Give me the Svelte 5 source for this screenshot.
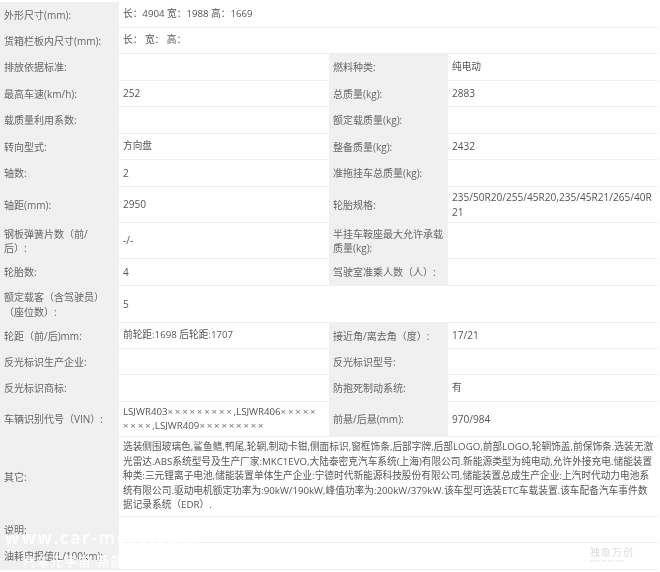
<script>
	// rows of the spec sheet: a/b left label and value, c/d right label and value
	// \uFF1A \uFF08 \uFF09 are the full width colon and brackets of the original
	const rows = [
		{ h: 26, a: '外形尺寸(mm):', b: '长\uFF1A4904 宽\uFF1A1988 高\uFF1A1669', plain: true },
		{ h: 26, a: '货箱栏板内尺寸(mm):', b: '长\uFF1A 宽\uFF1A 高\uFF1A', plain: true },
		{ h: 27, a: '排放依据标准:', b: '', c: '燃料种类:', d: '纯电动' },
		{ h: 26, a: '最高车速(km/h):', b: '252', c: '总质量(kg):', d: '2883' },
		{ h: 27, a: '载质量利用系数:', b: '', c: '额定载质量(kg):', d: '' },
		{ h: 26, a: '转向型式:', b: '方向盘', c: '整备质量(kg):', d: '2432' },
		{ h: 27, a: '轴数:', b: '2', c: '准拖挂车总质量(kg):', d: '' },
		{ h: 36, a: '轴距(mm):', b: '2950', c: '轮胎规格:', d: '235/50R20/255/45R20,235/45R21/265/40R21' },
		{ h: 36, a: '钢板弹簧片数\uFF08前/\n后\uFF09:', b: '-/-', c: '半挂车鞍座最大允许承载质量(kg):', d: '' },
		{ h: 27, a: '轮胎数:', b: '4', c: '驾驶室准乘人数\uFF08人\uFF09:', d: '' },
		{ h: 37, a: '额定载客\uFF08含驾驶员\uFF09\n\uFF08座位数\uFF09:', b: '5', plain: true },
		{ h: 26, a: '轮距\uFF08前/后)mm:', b: '前轮距:1698 后轮距:1707', c: '接近角/离去角\uFF08度\uFF09:', d: '17/21' },
		{ h: 26, a: '反光标识生产企业:', b: '', c: '反光标识型号:', d: '' },
		{ h: 27, a: '反光标识商标:', b: '', c: '防抱死制动系统:', d: '有' },
		{ h: 35, a: '车辆识别代号\uFF08VIN\uFF09:', vin: true, c: '前悬/后悬(mm):', d: '970/984' }
	];
	const other =
		'选装侧围玻璃色,鲨鱼鳍,鸭尾,轮辋,制动卡钳,侧面标识,窗框饰条,后部字牌,后部LOGO,前部LOGO,轮辋饰盖,前保饰条.选装无激光雷达.ABS系统型号及生产厂家:MKC1EVO,大陆泰密克汽车系统(上海)有限公司.新能源类型为纯电动,允许外接充电.储能装置种类:三元锂离子电池,储能装置单体生产企业:宁德时代新能源科技股份有限公司,储能装置总成生产企业:上汽时代动力电池系统有限公司.驱动电机额定功率为:90kW/190kW,峰值功率为:200kW/379kW.该车型可选装ETC车载装置.该车配备汽车事件数据记录系统\uFF08EDR\uFF09.';
	// latin-only values run a bit wider in the original
	const isNum = (s) => /^[\x00-\x7f]+$/.test(s ?? '');
</script>

<div class="sheet">
	{#each rows as row}
		<div class="row" style="height:{row.h}px">
			<div class="label">{row.a}</div>
			<div class="value">
				{#if row.vin}
					<p>LSJWR403<span class="x">×××××××××</span>,LSJWR406<span class="x">×××××</span><br /><span class="x">××××</span>,LSJWR409<span class="x">×××××××××</span></p>
				{:else}
					<p class:num={isNum(row.b)}>{row.b}</p>
				{/if}
			</div>
			{#if !row.plain}
				<div class="label">{row.c}</div>
				<div class="value"><p class:num={isNum(row.d)}>{row.d}</p></div>
			{/if}
		</div>
	{/each}
	<div class="row" style="height:80px">
		<div class="label">其它:</div>
		<div class="value"><p>{other}</p></div>
	</div>
	<div class="row" style="height:26px">
		<div class="label">说明:</div>
		<div class="value"></div>
	</div>
	<div class="row" style="height:27px">
		<div class="label">油耗申报值(L/100km):</div>
		<div class="value"></div>
	</div>
	<div class="mark">www.car-meta.com</div>
	<div class="mark sub">汽车元宇宙 新能源</div>
	<div class="logo">独象万创<span>www.dxwc.com</span></div>
</div>

<style>
	:global(body) {
		background: #fff;
	}
	.sheet {
		position: relative;
		width: 660px;
		height: 572px;
		padding-top: 2px;
		box-sizing: border-box;
		overflow: hidden;
		font-family: "Open Sans", "Noto Sans CJK SC", sans-serif;
		font-size: 9.7px;
		line-height: 14.5px;
		color: #555;
		filter: blur(0.3px);
	}
	.row {
		display: flex;
		box-sizing: border-box;
		border-bottom: 1px solid #f0f0f0;
		width: 658px;
	}
	.label {
		box-sizing: border-box;
		width: 119px;
		flex: none;
		padding: 0 4px;
		background: #f0f0f0;
		display: flex;
		align-items: center;
		white-space: pre-line;
		color: #666;
		font-size: 10px;
		margin-bottom: -1px;
	}
	.value {
		box-sizing: border-box;
		flex: 1;
		min-width: 0;
		padding: 0 4px;
		display: flex;
		align-items: center;
		word-break: break-all;
	}
	p {
		margin: 0;
	}
	.num {
		font-size: 10.1px;
	}
	.x {
		letter-spacing: 1.8px;
		color: #777;
	}
	.mark {
		position: absolute;
		left: 5px;
		top: 531px;
		font-size: 17px;
		font-weight: 700;
		letter-spacing: 1.6px;
		color: rgba(255, 255, 255, 0.8);
	}
	.mark.sub {
		left: 22px;
		top: 554px;
		font-size: 13px;
		letter-spacing: 1px;
	}
	.logo {
		position: absolute;
		left: 590px;
		top: 546px;
		font-size: 10px;
		line-height: 12px;
		color: #ddd;
		letter-spacing: 1px;
	}
	.logo span {
		display: block;
		font-size: 4px;
		line-height: 5px;
		letter-spacing: 0.5px;
	}
</style>
